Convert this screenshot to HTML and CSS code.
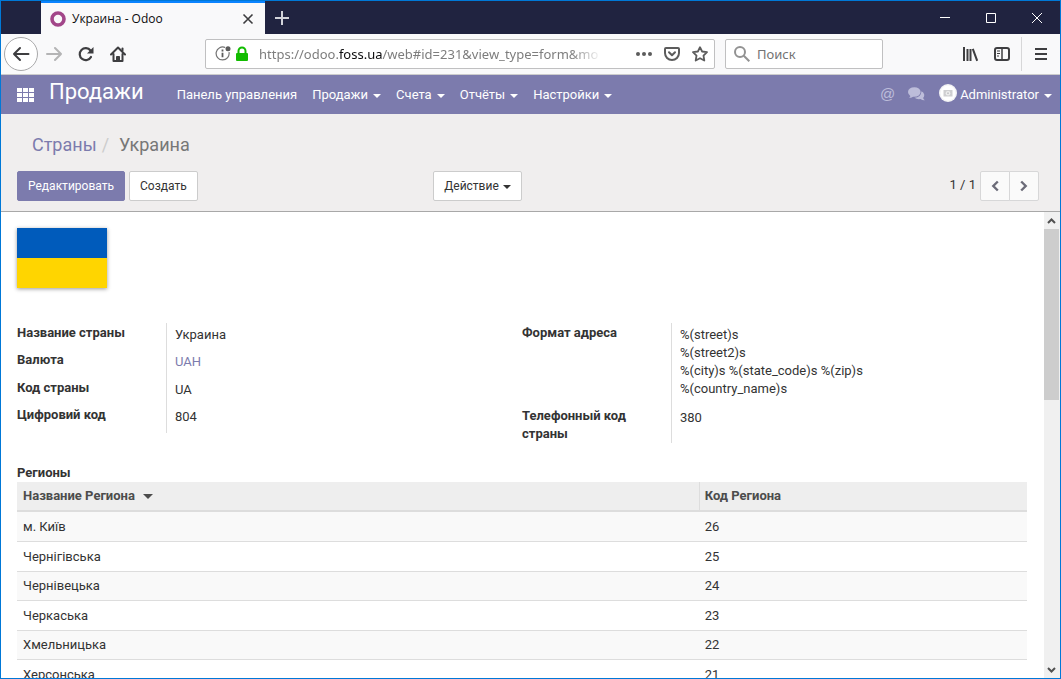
FILE: index.html
```html
<!DOCTYPE html>
<html lang="ru">
<head>
<meta charset="utf-8">
<title>Украина - Odoo</title>
<link rel="stylesheet" href="styles.css">
</head>
<body>
<div class="window">
  <header class="tabbar">
    <div class="tab">
      <svg class="favicon" width="16" height="16" viewBox="0 0 16 16"><circle cx="8" cy="8" r="6" fill="none" stroke="#a24689" stroke-width="3.6"/></svg>
      <span class="tab-title">Украина - Odoo</span>
      <button class="icon-btn" aria-label="Закрыть вкладку"><svg width="12" height="12" viewBox="0 0 12 12" fill="none" stroke="#3d3d3f" stroke-width="1.6"><path d="M1.5 1.500l9 9M10.500 1.500l-9 9"/></svg></button>
    </div>
    <button class="icon-btn new-tab" aria-label="Новая вкладка"><svg width="14" height="14" viewBox="0 0 14 14" fill="none" stroke="#d2d3da" stroke-width="2"><path d="M7 0v14M0 7h14"/></svg></button>
    <div class="window-controls">
      <button class="icon-btn" aria-label="Свернуть"><svg width="10" height="10" viewBox="0 0 10 10"><path d="M0 4.500h10" stroke="#fff"/></svg></button>
      <button class="icon-btn" aria-label="Развернуть"><svg width="10" height="10" viewBox="0 0 10 10"><path d="M.5.5h9v9h-9z" fill="none" stroke="#fff"/></svg></button>
      <button class="icon-btn" aria-label="Закрыть"><svg width="10" height="10" viewBox="0 0 10 10"><path d="M0 0l10 10M10 0L0 10" stroke="#fff"/></svg></button>
    </div>
  </header>

  <div class="toolbar">
    <div class="nav-buttons">
      <button class="icon-btn back" aria-label="Назад"><svg width="18" height="16" viewBox="0 0 18 16" fill="none" stroke="#3e3e40" stroke-width="2" stroke-linecap="round" stroke-linejoin="round"><path d="M16.500 8H2M8 2L2 8l6 6"/></svg></button>
      <button class="icon-btn" aria-label="Вперёд"><svg width="16" height="16" viewBox="0 0 16 16" fill="none" stroke="#b4b4b5" stroke-width="2" stroke-linecap="round" stroke-linejoin="round"><path d="M1 8h14M9 2l6 6-6 6"/></svg></button>
      <button class="icon-btn" aria-label="Обновить"><svg width="16" height="16" viewBox="0 0 16 16"><path d="M12.500 4.500A6 6 0 1 0 13 11" fill="none" stroke="#3e3e40" stroke-width="2.200" stroke-linecap="round"/><path d="M15.500 1v6.500H9z" fill="#3e3e40"/></svg></button>
      <button class="icon-btn" aria-label="Домой"><svg width="16" height="16" viewBox="0 0 16 16" fill="none" stroke="#3e3e40" stroke-width="2" stroke-linecap="round" stroke-linejoin="round"><path d="M1 8.500L8 1.500l7 7M3.500 8v7h9V8"/><path d="M6.500 15v-4.500h3V15" fill="#3e3e40" stroke-width="1"/><path d="M12.500 2.500v2"/></svg></button>
    </div>
    <div class="field url-field">
      <svg width="16" height="16" viewBox="0 0 16 16"><path d="M10.200 1.500A6.500 6.500 0 1 0 14 6.200" fill="none" stroke="#737373" stroke-width="1.200"/><path d="M7.500 6.800v4.500M7.500 3.600v1.800" stroke="#5c5c5c" stroke-width="1.800"/><circle cx="13" cy="2.800" r="2.500" fill="#5c5c5c"/></svg>
      <svg width="14" height="16" viewBox="0 0 14 16"><rect x="1" y="7" width="12" height="8" rx="1" fill="#12bc00"/><path d="M3.500 8V5a3.500 3.500 0 0 1 7 0v3" fill="none" stroke="#12bc00" stroke-width="2"/></svg>
      <div class="url" role="textbox" aria-label="Адрес">https://odoo.<span class="domain">foss.ua</span>/web#id=231&amp;view_type=form&amp;mo</div>
      <div class="url-actions">
        <button class="icon-btn" aria-label="Действия на странице"><svg width="16" height="16" viewBox="0 0 16 16" fill="#5c5c5c"><circle cx="2" cy="8" r="2"/><circle cx="8" cy="8" r="2"/><circle cx="14" cy="8" r="2"/></svg></button>
        <button class="icon-btn" aria-label="Сохранить в Pocket"><svg width="16" height="16" viewBox="0 0 16 16" fill="none" stroke="#5c5c5c" stroke-width="2" stroke-linecap="round" stroke-linejoin="round"><path d="M2 2h12q1 0 1 1v4a7 7 0 0 1-14 0V3q0-1 1-1z"/><path d="M5 6.300l3 3 3-3"/></svg></button>
        <button class="icon-btn" aria-label="В закладки"><svg width="16" height="16" viewBox="0 0 16 16" fill="none" stroke="#5c5c5c" stroke-width="1.800" stroke-linejoin="round"><path d="M8 1.200l2.100 4.300 4.900.7-3.500 3.400.8 4.900L8 12.200l-4.300 2.300.8-4.900L1 6.200l4.900-.7z"/></svg></button>
      </div>
    </div>
    <label class="field search-field">
      <svg width="16" height="16" viewBox="0 0 16 16" fill="none" stroke="#929292" stroke-width="2"><circle cx="6" cy="6" r="5"/><path d="M9.800 9.800l5.500 5.500"/></svg>
      <input class="search-input" type="text" placeholder="Поиск" aria-label="Поиск">
    </label>
    <div class="tool-buttons">
      <button class="icon-btn" aria-label="Библиотека"><svg width="16" height="16" viewBox="0 0 16 16" fill="none" stroke="#3e3e40" stroke-width="2"><path d="M2 1v14M5.500 3v12M8.500 3v12M10.800 2.800l4.400 12"/></svg></button>
      <button class="icon-btn" aria-label="Боковая панель"><svg width="16" height="14" viewBox="0 0 16 14" fill="none" stroke="#3e3e40" stroke-width="2"><rect x="1" y="1" width="14" height="12" rx="2"/><path d="M8 1v12" stroke-width="1.500"/><path d="M3 4h3M3 6.500h3M3 9h2" stroke-width="1"/></svg></button>
      <button class="icon-btn menu" aria-label="Меню"><svg width="12" height="12" viewBox="0 0 12 12" stroke="#3e3e40" stroke-width="2"><path d="M0 1h12M0 6h12M0 11h12"/></svg></button>
    </div>
  </div>

  <nav class="navbar">
    <button class="icon-btn apps" aria-label="Приложения"><svg width="17" height="14" viewBox="0 0 17 14" fill="#fff"><path d="M0 0h5v4H0zM6 0h5v4H6zM12 0h5v4h-5zM0 5h5v4H0zM6 5h5v4H6zM12 5h5v4h-5zM0 10h5v4H0zM6 10h5v4H6zM12 10h5v4h-5z"/></svg></button>
    <a class="brand" href="#">Продажи</a>
    <div class="menu-list">
      <a class="menu-item" href="#">Панель управления</a>
      <a class="menu-item" href="#">Продажи<span class="caret"></span></a>
      <a class="menu-item" href="#">Счета<span class="caret"></span></a>
      <a class="menu-item" href="#">Отчёты<span class="caret"></span></a>
      <a class="menu-item" href="#">Настройки<span class="caret"></span></a>
    </div>
    <div class="systray">
      <a class="at" href="#">@</a>
      <a class="chat" href="#" aria-label="Сообщения"><svg width="17" height="14" viewBox="0 0 17 14" fill="#bdbdda"><ellipse cx="6.300" cy="5" rx="6.300" ry="4.800"/><path d="M2.500 7.500q0 2.500-1.500 3.500 3 0 5-2z"/><path d="M13.500 4.200a4.300 4.300 0 0 1 1.600 6.900q.6 1.500 1.700 2.100-2.500.2-4.300-1.200-3.500.6-6-1.200 6.500-.5 7-6.600z"/></svg></a>
      <a class="menu-item user" href="#">
        <svg class="avatar" width="18" height="18" viewBox="0 0 18 18"><circle cx="9" cy="9" r="9" fill="#f3f3f5"/><circle cx="9" cy="9" r="7.500" fill="#fff"/><rect x="4.500" y="6" width="9" height="6.500" fill="#cfcfd1"/><circle cx="9" cy="9.200" r="2.300" fill="#eee"/><circle cx="9" cy="9.200" r="1" fill="#c5c5c8"/></svg>
        <span class="user-name">Administrator</span><span class="caret"></span></a>
    </div>
  </nav>

  <section class="control-panel">
    <div class="breadcrumb"><a class="crumb" href="#">Страны</a><span class="slash">/</span><span class="crumb-active">Украина</span></div>
    <div class="actions">
      <div class="action-left">
        <button class="btn btn-primary">Редактировать</button>
        <button class="btn">Создать</button>
      </div>
      <div class="action-middle"><button class="btn btn-menu">Действие<span class="caret"></span></button></div>
      <div class="pager">
        <span class="pager-count">1 / 1</span>
        <button class="btn pager-btn pager-prev" aria-label="Назад"><svg width="8" height="12" viewBox="0 0 8 12" fill="none" stroke="#6b6b78" stroke-width="2.400"><path d="M6.800 1.500L2.300 6l4.500 4.500"/></svg></button>
        <button class="btn pager-btn pager-next" aria-label="Вперёд"><svg width="8" height="12" viewBox="0 0 8 12" fill="none" stroke="#6b6b78" stroke-width="2.400"><path d="M1.200 1.500L5.700 6l-4.500 4.500"/></svg></button>
      </div>
    </div>
  </section>

  <div class="content">
    <main class="form">
      <div class="flag" role="img" aria-label="Флаг Украины"></div>
      <div class="groups">
        <dl class="group">
          <div class="row"><dt>Название страны</dt><dd>Украина</dd></div>
          <div class="row"><dt>Валюта</dt><dd><a class="link" href="#">UAH</a></dd></div>
          <div class="row"><dt>Код страны</dt><dd>UA</dd></div>
          <div class="row"><dt>Цифровий код</dt><dd>804</dd></div>
        </dl>
        <dl class="group">
          <div class="row row-address"><dt>Формат адреса</dt><dd>%(street)s<br>%(street2)s<br>%(city)s %(state_code)s %(zip)s<br>%(country_name)s</dd></div>
          <div class="row"><dt>Телефонный код страны</dt><dd>380</dd></div>
        </dl>
      </div>
      <h2 class="section-title" id="regions">Регионы</h2>
      <table class="table" aria-labelledby="regions">
        <thead><tr><th class="col-name">Название Региона<span class="caret"></span></th><th>Код Региона</th></tr></thead>
        <tbody>
          <tr><td>м. Київ</td><td>26</td></tr>
          <tr><td>Чернігівська</td><td>25</td></tr>
          <tr><td>Чернівецька</td><td>24</td></tr>
          <tr><td>Черкаська</td><td>23</td></tr>
          <tr><td>Хмельницька</td><td>22</td></tr>
          <tr><td>Херсонська</td><td>21</td></tr>
        </tbody>
      </table>
    </main>
    <div class="scrollbar">
      <svg class="scroll-arrow" width="16" height="16" viewBox="0 0 16 16" fill="none" stroke="#505050" stroke-width="2"><path d="M4 11l3.500-3.500L11 11"/></svg>
      <div class="thumb"></div>
      <svg class="scroll-arrow" width="16" height="16" viewBox="0 0 16 16" fill="none" stroke="#505050" stroke-width="2"><path d="M4 6l3.500 3.500L11 6"/></svg>
    </div>
  </div>
</div>
</body>
</html>
```

FILE: styles.css
```css
* { box-sizing: border-box; }

body {
  margin: 0;
  font: 13px/18px Roboto, "Noto Sans", sans-serif;
  color: #333;
}

a { color: inherit; text-decoration: none; }
button { font: inherit; }
svg { display: block; flex: none; }

.window {
  display: flex;
  flex-direction: column;
  height: 100vh;
  overflow: hidden;
  border: 1px solid #0078d7;
  background: #fff;
}

.icon-btn {
  display: flex;
  align-items: center;
  justify-content: center;
  padding: 0;
  border: 0;
  background: none;
}

/* Tabs */
.tabbar {
  display: flex;
  flex: none;
  height: 33px;
  padding-left: 40px;
  background: #202340;
  font: 12px/16px "Open Sans", "Noto Sans", sans-serif;
}

.tab {
  display: flex;
  align-items: center;
  width: 224px;
  padding: 0 11px 0 9px;
  border-top: 2px solid #0a84ff;
  background: #f9f9fa;
  color: #0c0c0d;
}

.tab-title { flex: 1; margin-left: 6px; }
.new-tab { width: 34px; }

.window-controls { display: flex; margin-left: auto; }
.window-controls .icon-btn { width: 46px; }

/* Toolbar */
.toolbar {
  display: flex;
  align-items: center;
  flex: none;
  height: 41px;
  padding-left: 3px;
  border-bottom: 1px solid #ccc;
  background: #f9f9fa;
  font: 13px/18px "Noto Sans", sans-serif;
}

.nav-buttons { display: flex; align-items: center; margin-right: 71px; }
.nav-buttons .icon-btn { width: 32px; height: 32px; }
.nav-buttons .back {
  width: 34px;
  height: 34px;
  border: 1px solid #a9a9aa;
  border-radius: 50%;
  background: #fff;
}

.field {
  display: flex;
  align-items: center;
  height: 30px;
  border: 1px solid #c0c0c1;
  border-radius: 2px;
  background: #fff;
}

.url-field { flex: 1; min-width: 0; padding: 0 6px 0 9px; gap: 4px; }

.url {
  flex: 1;
  min-width: 0;
  margin-left: 6px;
  overflow: hidden;
  white-space: nowrap;
  color: #7d7d7d;
  -webkit-mask-image: linear-gradient(to left, transparent, #000 32px);
  mask-image: linear-gradient(to left, transparent, #000 32px);
}

.domain { color: #0c0c0d; }
.url-actions { display: flex; gap: 12px; margin-left: 30px; }

.search-field { width: 158px; margin-left: 10px; padding: 0 8px; gap: 7px; }

.search-input {
  width: 100%;
  padding: 0;
  border: 0;
  outline: 0;
  background: none;
  font: inherit;
}
.search-input::placeholder { color: #737373; }

.tool-buttons { display: flex; margin-left: 71px; }
.tool-buttons .icon-btn { width: 32px; height: 34px; }
.tool-buttons .menu { width: 39px; margin-left: 3px; border-left: 1px solid #d7d7d8; }

/* Application bar */
.navbar {
  display: flex;
  align-items: center;
  flex: none;
  height: 39px;
  padding: 0 8px 0 16px;
  background: #7c7bad;
  color: #fff;
}

.brand { margin: 0 33px 6px 15px; font-size: 22px; line-height: 30px; }
.menu-list { display: flex; gap: 15px; }
.menu-item { display: flex; align-items: center; }

.caret {
  display: inline-block;
  margin-left: 5px;
  border: 4px solid transparent;
  border-top-color: currentColor;
  border-bottom: 0;
}
.menu-item .caret { margin-top: 2px; }

.systray { display: flex; align-items: center; margin-left: auto; }
.at {
  margin-bottom: 2px;
  color: #bdbdda;
  font-family: "Liberation Sans", sans-serif;
  font-size: 15px;
}
.chat { margin: 0 14px 2px 13px; }
.avatar { margin-bottom: 4px; }
.user-name { margin-left: 3px; }

/* Control panel */
.control-panel {
  flex: none;
  padding: 18px 21px 10px 16px;
  border-bottom: 1px solid #a8a8a8;
  background: #f0eeee;
}

.breadcrumb {
  display: flex;
  padding-left: 15px;
  font-size: 18px;
  line-height: 26px;
}
.crumb { color: #7c7bad; }
.slash { margin: 0 10px 0 5px; color: #ccc; }
.crumb-active { color: #777; }

.actions { display: flex; margin-top: 13px; }
.action-left { display: flex; flex: 416; gap: 4px; }
.action-middle { flex: 516; }

.btn {
  height: 30px;
  padding: 0 10px;
  border: 1px solid #ccc;
  border-radius: 2px;
  background: #fff;
  color: #333;
  font-size: 12px;
}
.btn-primary { border-color: #7c7bad; background: #7c7bad; color: #fff; }
.btn-menu .caret { vertical-align: middle; margin-left: 4px; }

.pager { display: flex; }
.pager-count { margin: 5px 4px 0 0; white-space: nowrap; }
.pager-btn {
  display: flex;
  align-items: center;
  justify-content: center;
  width: 30px;
  padding: 0;
  border-color: #d7d7d8;
  background: #fafafa;
}
.pager-prev { border-radius: 2px 0 0 2px; }
.pager-next { margin-left: -1px; border-radius: 0 2px 2px 0; }

/* Form */
.content { display: flex; flex: 1; min-height: 0; }
.form { flex: 1; padding: 16px 17px 0 16px; overflow: hidden; }

.flag {
  width: 90px;
  height: 60px;
  background: linear-gradient(#005bbb 50%, #ffd500 50%);
  box-shadow: 0 1px 4px rgba(0, 0, 0, 0.4);
}

.groups { display: grid; grid-template-columns: 1fr 1fr; margin-top: 35px; align-items: start; }
.group { margin: 0; }
.row { display: grid; grid-template-columns: 150px 1fr; min-height: 27px; }
.row:nth-child(even) { min-height: 28px; }
.row.row-address { min-height: 83px; }
dt { padding: 1px 8px 0 0; border-right: 1px solid #ddd; font-weight: 700; }
dd { margin: 0; padding: 3px 8px 0; }
.link { color: #7c7bad; }

.section-title { margin: 21px 0 0; font-size: 13px; line-height: 18px; }

.table {
  width: 100%;
  border-collapse: separate;
  border-spacing: 0;
  table-layout: fixed;
}
.table th,
.table td { height: 30px; padding: 0 5px; text-align: left; }
.table th:first-child,
.table td:first-child { padding-left: 6px; }
.table th { border-bottom: 2px solid #ddd; background: #eee; color: #4c4c4c; }
.table .col-name { width: 67.6%; border-right: 1px solid #ddd; }
.table th .caret { margin-left: 8px; vertical-align: middle; border-width: 5px 5px 0; }
.table td { border-bottom: 1px solid #ddd; }
.table tbody tr:nth-child(odd) { background: #f9f9f9; }
.table tbody tr:nth-child(odd):not(:first-child) td { height: 29px; }

/* Scrollbar */
.scrollbar {
  display: flex;
  flex-direction: column;
  flex: none;
  width: 16px;
  background: #f0f0f0;
}
.thumb { width: 15px; height: 171px; margin: 1px 0 auto; background: #cdcdcd; }
```
